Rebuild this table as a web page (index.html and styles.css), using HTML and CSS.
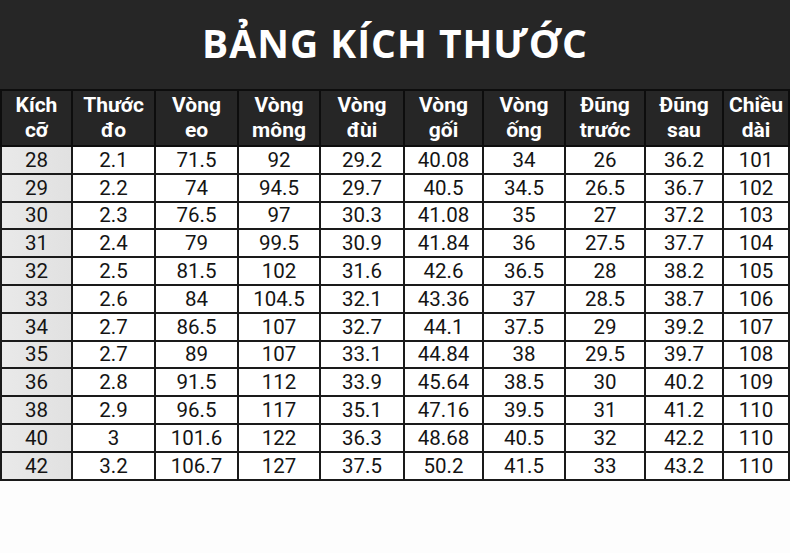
FILE: index.html
```html
<!DOCTYPE html>
<html lang="vi">
<head>
<meta charset="utf-8">
<link rel="stylesheet" href="styles.css">
</head>
<body>
<div class="page">
  <header class="title-bar"><h1 class="title">BẢNG KÍCH THƯỚC</h1></header>
  <table class="size-table">
    <colgroup>
      <col class="c1"><col class="c2"><col class="c3"><col class="c4"><col class="c5">
      <col class="c6"><col class="c7"><col class="c8"><col class="c9"><col class="c10">
    </colgroup>
    <thead>
      <tr>
        <th>Kích<br>cỡ</th><th>Thước<br>đo</th><th>Vòng<br>eo</th><th>Vòng<br>mông</th><th>Vòng<br>đùi</th>
        <th>Vòng<br>gối</th><th>Vòng<br>ống</th><th>Đũng<br>trước</th><th>Đũng<br>sau</th><th>Chiều<br>dài</th>
      </tr>
    </thead>
    <tbody>
      <tr><td class="size">28</td><td>2.1</td><td>71.5</td><td>92</td><td>29.2</td><td>40.08</td><td>34</td><td>26</td><td>36.2</td><td>101</td></tr>
      <tr><td class="size">29</td><td>2.2</td><td>74</td><td>94.5</td><td>29.7</td><td>40.5</td><td>34.5</td><td>26.5</td><td>36.7</td><td>102</td></tr>
      <tr><td class="size">30</td><td>2.3</td><td>76.5</td><td>97</td><td>30.3</td><td>41.08</td><td>35</td><td>27</td><td>37.2</td><td>103</td></tr>
      <tr><td class="size">31</td><td>2.4</td><td>79</td><td>99.5</td><td>30.9</td><td>41.84</td><td>36</td><td>27.5</td><td>37.7</td><td>104</td></tr>
      <tr><td class="size">32</td><td>2.5</td><td>81.5</td><td>102</td><td>31.6</td><td>42.6</td><td>36.5</td><td>28</td><td>38.2</td><td>105</td></tr>
      <tr><td class="size">33</td><td>2.6</td><td>84</td><td>104.5</td><td>32.1</td><td>43.36</td><td>37</td><td>28.5</td><td>38.7</td><td>106</td></tr>
      <tr><td class="size">34</td><td>2.7</td><td>86.5</td><td>107</td><td>32.7</td><td>44.1</td><td>37.5</td><td>29</td><td>39.2</td><td>107</td></tr>
      <tr><td class="size">35</td><td>2.7</td><td>89</td><td>107</td><td>33.1</td><td>44.84</td><td>38</td><td>29.5</td><td>39.7</td><td>108</td></tr>
      <tr><td class="size">36</td><td>2.8</td><td>91.5</td><td>112</td><td>33.9</td><td>45.64</td><td>38.5</td><td>30</td><td>40.2</td><td>109</td></tr>
      <tr><td class="size">38</td><td>2.9</td><td>96.5</td><td>117</td><td>35.1</td><td>47.16</td><td>39.5</td><td>31</td><td>41.2</td><td>110</td></tr>
      <tr><td class="size">40</td><td>3</td><td>101.6</td><td>122</td><td>36.3</td><td>48.68</td><td>40.5</td><td>32</td><td>42.2</td><td>110</td></tr>
      <tr><td class="size">42</td><td>3.2</td><td>106.7</td><td>127</td><td>37.5</td><td>50.2</td><td>41.5</td><td>33</td><td>43.2</td><td>110</td></tr>
    </tbody>
  </table>
</div>
</body>
</html>
```
FILE: styles.css
```css
html, body {
  margin: 0;
  padding: 0;
  background: #ffffff;
}
.page {
  width: 790px;
  height: 553px;
  background: #fdfdfd;
  font-family: Roboto, "Liberation Sans", sans-serif;
}
.title-bar {
  height: 89px;
  background: #262626;
  display: flex;
  align-items: center;
  justify-content: center;
}
.title {
  margin: 0;
  color: #ffffff;
  font-family: "Open Sans", Roboto, "Liberation Sans", sans-serif;
  font-weight: 700;
  font-size: 39px;
  line-height: 46px;
  letter-spacing: 1px;
  padding-bottom: 4px;
}
.size-table {
  border-collapse: collapse;
  table-layout: fixed;
  width: 788px;
  background: #262626;
}
.c1 { width: 71px; }
.c2 { width: 83px; }
.c3 { width: 83px; }
.c4 { width: 82px; }
.c5 { width: 84px; }
.c6 { width: 79px; }
.c7 { width: 82px; }
.c8 { width: 80px; }
.c9 { width: 78px; }
.c10 { width: 66px; }
.size-table th {
  height: 54px;
  padding: 0;
  background: #262626;
  color: #ffffff;
  font-weight: 700;
  font-size: 21px;
  line-height: 25px;
  border: 2px solid #0d0d0d;
  text-align: center;
  vertical-align: middle;
}
.size-table td {
  height: 25.8px;
  padding: 0;
  background: #ffffff;
  color: #141414;
  font-size: 20.5px;
  line-height: 24px;
  border: 2px solid #1a1a1a;
  text-align: center;
  vertical-align: middle;
}
.size-table td.size {
  background: linear-gradient(90deg, #e9e9e9, #e1e1e1);
}
```
